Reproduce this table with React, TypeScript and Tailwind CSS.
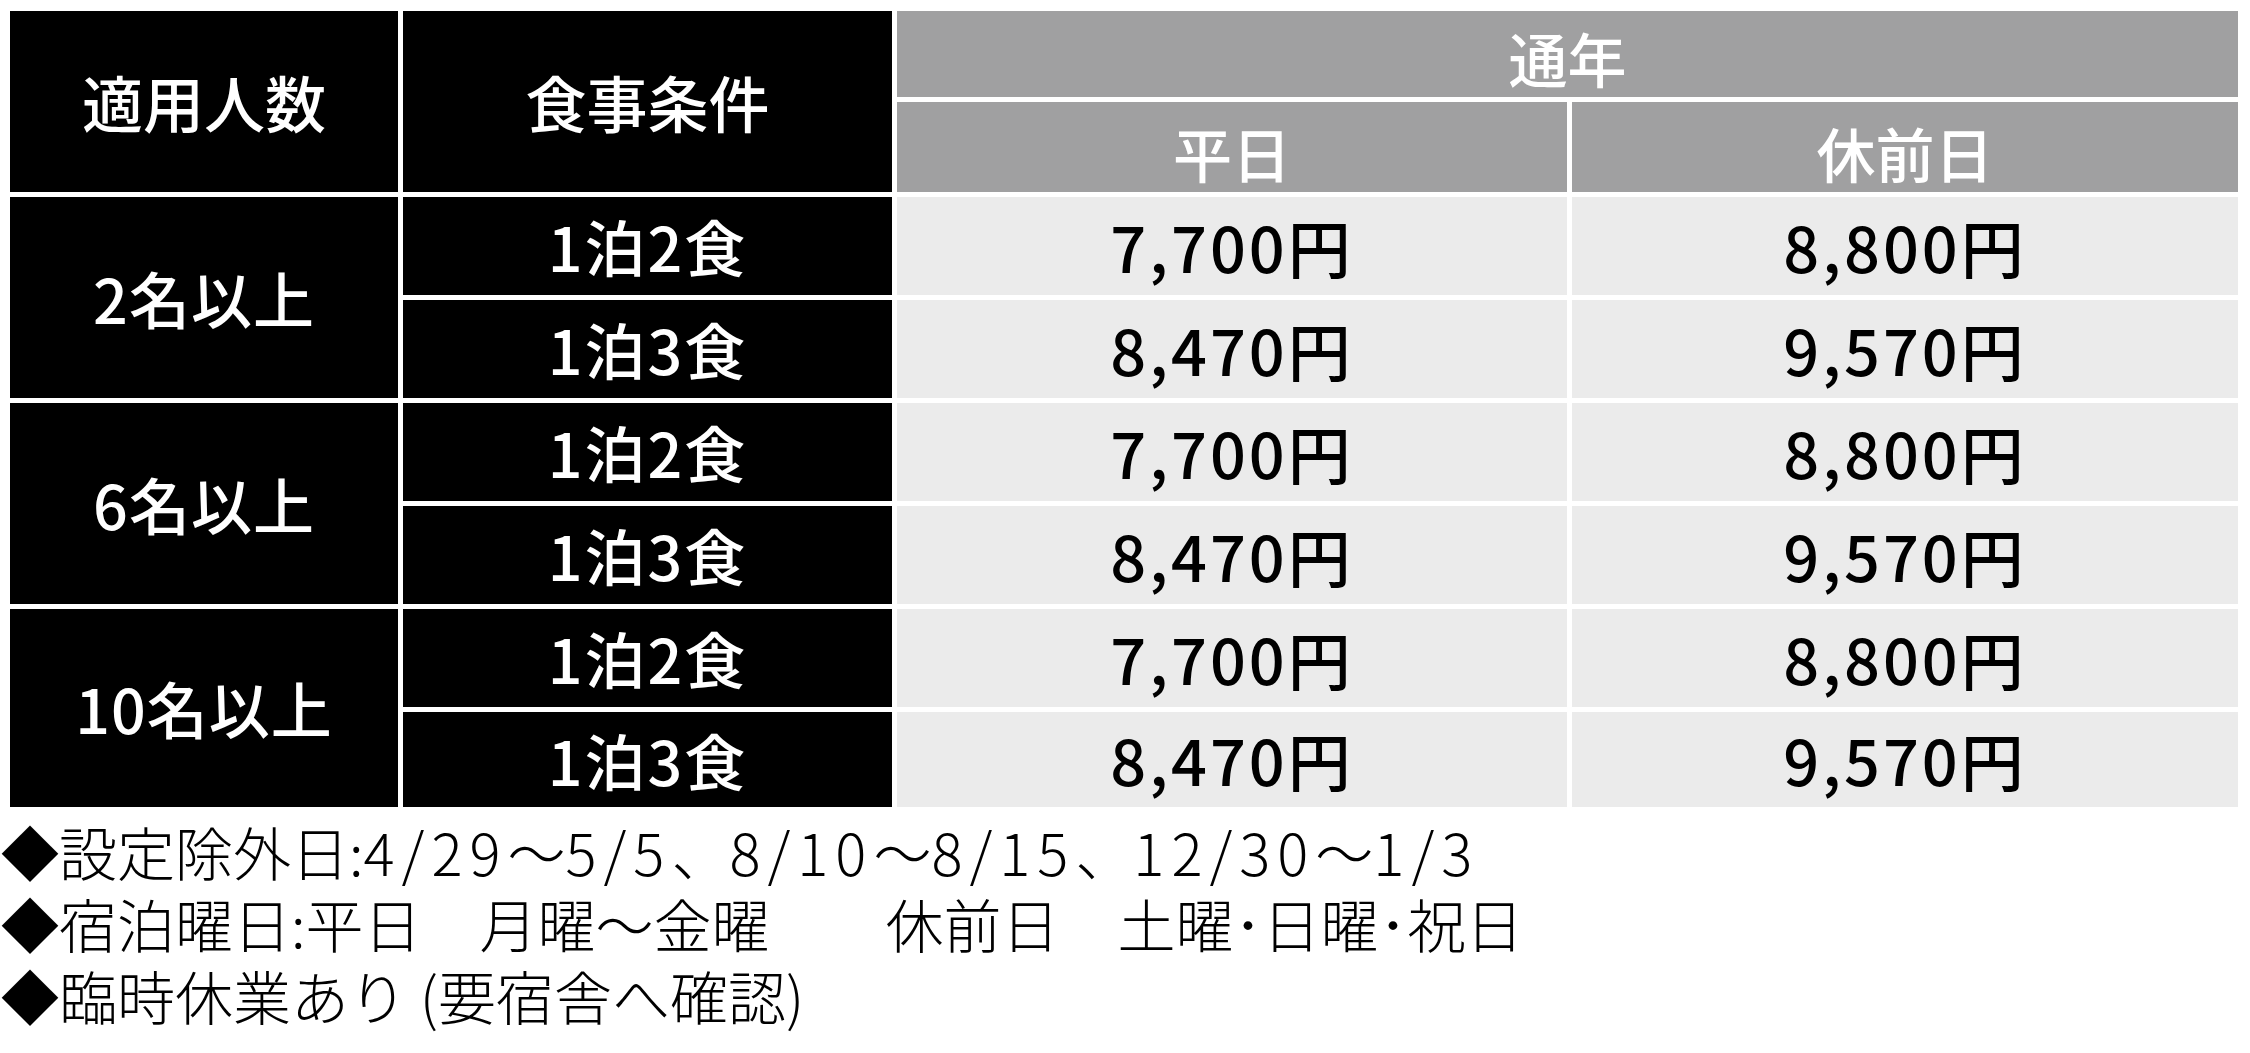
import React from 'react';

const groups = [
  { label: '2名以上', rows: [['1泊2食', '7,700円', '8,800円'], ['1泊3食', '8,470円', '9,570円']] },
  { label: '6名以上', rows: [['1泊2食', '7,700円', '8,800円'], ['1泊3食', '8,470円', '9,570円']] },
  { label: '10名以上', rows: [['1泊2食', '7,700円', '8,800円'], ['1泊3食', '8,470円', '9,570円']] },
];

const font = { fontFamily: '"Noto Sans CJK JP", "Noto Sans", sans-serif' };

// digits in the notes are set wider than the kanji around them
const Num: React.FC<{ children: React.ReactNode }> = ({ children }) => (
  <span className="tracking-[7px]">{children}</span>
);

const App: React.FC = () => {
  return (
    <div className="w-[2250px] h-[1053px] bg-white pl-[10px] pt-[11px] overflow-hidden" style={font}>
      <div className="grid grid-cols-[388px_489px_670px_666px] grid-rows-[86px_90px_98px_98px_98px_98px_98px_95px] gap-[5px] w-[2228px]">
        <div className="row-span-2 bg-black text-white flex items-center justify-center text-[61px] font-medium">
          適用人数
        </div>
        <div className="row-span-2 bg-black text-white flex items-center justify-center text-[61px] font-medium">
          食事条件
        </div>
        <div className="col-span-2 bg-[#a0a0a1] text-white flex items-center justify-center pt-[8px] text-[59px] font-medium">
          通年
        </div>
        <div className="bg-[#a0a0a1] text-white flex items-center justify-center pt-[12px] text-[59px] font-medium">
          平日
        </div>
        <div className="bg-[#a0a0a1] text-white flex items-center justify-center pt-[12px] text-[59px] font-medium">
          休前日
        </div>

        {groups.map((g) => (
          <React.Fragment key={g.label}>
            <div className="row-span-2 bg-black text-white flex items-center justify-center text-[61px] font-medium tracking-[1px]">
              {g.label}
            </div>
            {g.rows.map(([meal, weekday, holiday], i) => (
              <React.Fragment key={i}>
                <div className="col-start-2 bg-black text-white flex items-center justify-center text-[61px] font-medium tracking-[2px]">
                  {meal}
                </div>
                <div className="bg-[#ebebeb] text-black flex items-center justify-center text-[63px] font-medium tracking-[3px]">
                  {weekday}
                </div>
                <div className="bg-[#ebebeb] text-black flex items-center justify-center text-[63px] font-medium tracking-[3px]">
                  {holiday}
                </div>
              </React.Fragment>
            ))}
          </React.Fragment>
        ))}
      </div>

      <div className="mt-[8px] -ml-[9px] text-[58px] leading-[72px] font-light text-black whitespace-nowrap">
        <p>
          ◆設定除外日:<Num>4/29</Num>～<Num>5/5</Num>、<Num>8/10</Num>～<Num>8/15</Num>、<Num>12/30</Num>～<Num>1/3</Num>
        </p>
        <p>◆宿泊曜日:平日　月曜～金曜　　休前日　土曜･日曜･祝日</p>
        <p>◆臨時休業あり (要宿舎へ確認)</p>
      </div>
    </div>
  );
};

export default App;
